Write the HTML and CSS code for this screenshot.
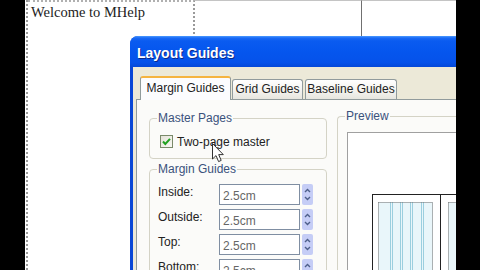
FILE: index.html
```html
<!DOCTYPE html>
<html>
<head>
<meta charset="utf-8">
<link rel="stylesheet" href="styles.css">
</head>
<body>
<div class="screen">
  <div class="doc">
    <div class="cell c1"><span class="welcome">Welcome to MHelp</span></div>
    <div class="cell c2"></div>
    <div class="cell c3"></div>
  </div>
  <div class="dialog">
    <div class="titlebar">Layout Guides</div>
    <div class="body">
      <div class="tabs">
        <div class="tab active t1">Margin Guides</div>
        <div class="tab t2">Grid Guides</div>
        <div class="tab t3">Baseline Guides</div>
      </div>
      <div class="panel">
        <div class="leftcol">
          <div class="group gp-master">
            <div class="legend">Master Pages</div>
            <div class="check">
              <span class="box"><svg width="11" height="11" viewBox="0 0 11 11"><path d="M2 5.5 L4.3 8 L9 2.8" fill="none" stroke="#21a121" stroke-width="2"/></svg></span>
              <span>Two-page master</span>
            </div>
          </div>
          <div class="group gp-margin">
            <div class="legend">Margin Guides</div>
            <div class="rows">
              <div class="row"><span class="lbl">Inside:</span><span class="input">2.5cm</span><span class="spin"><svg width="11" height="21" viewBox="0 0 11 21"><path d="M3 8 L5.5 5.5 L8 8 M3 13 L5.5 15.5 L8 13" fill="none" stroke="#4e5f8a" stroke-width="1.4"/></svg></span></div>
              <div class="row"><span class="lbl">Outside:</span><span class="input">2.5cm</span><span class="spin"><svg width="11" height="21" viewBox="0 0 11 21"><path d="M3 8 L5.5 5.5 L8 8 M3 13 L5.5 15.5 L8 13" fill="none" stroke="#4e5f8a" stroke-width="1.4"/></svg></span></div>
              <div class="row"><span class="lbl">Top:</span><span class="input">2.5cm</span><span class="spin"><svg width="11" height="21" viewBox="0 0 11 21"><path d="M3 8 L5.5 5.5 L8 8 M3 13 L5.5 15.5 L8 13" fill="none" stroke="#4e5f8a" stroke-width="1.4"/></svg></span></div>
              <div class="row"><span class="lbl">Bottom:</span><span class="input">2.5cm</span><span class="spin"><svg width="11" height="21" viewBox="0 0 11 21"><path d="M3 8 L5.5 5.5 L8 8 M3 13 L5.5 15.5 L8 13" fill="none" stroke="#4e5f8a" stroke-width="1.4"/></svg></span></div>
            </div>
          </div>
        </div>
        <div class="group gp-preview">
          <div class="legend">Preview</div>
          <div class="previewbox">
            <svg width="200" height="200" viewBox="0 0 200 200">
              <rect x="30" y="69" width="55" height="140" fill="#e9f6fa"/>
              <rect x="100" y="69" width="60" height="140" fill="#e9f6fa"/>
              <g stroke="#9ccfdf" stroke-width="1">
                <line x1="42.5" y1="69" x2="42.5" y2="200"/>
                <line x1="44.5" y1="69" x2="44.5" y2="200"/>
                <line x1="52.5" y1="69" x2="52.5" y2="200"/>
                <line x1="54.5" y1="69" x2="54.5" y2="200"/>
                <line x1="62.5" y1="69" x2="62.5" y2="200"/>
                <line x1="64.5" y1="69" x2="64.5" y2="200"/>
                <line x1="73.5" y1="69" x2="73.5" y2="200"/>
                <line x1="75.5" y1="69" x2="75.5" y2="200"/>
              </g>
              <g stroke="#6a6a6a" stroke-width="1" stroke-dasharray="1 1" fill="none">
                <line x1="30.5" y1="69.5" x2="30.5" y2="200"/>
                <line x1="84.5" y1="69.5" x2="84.5" y2="200"/>
                <line x1="30.5" y1="69.5" x2="84.5" y2="69.5"/>
                <line x1="100.5" y1="69.5" x2="100.5" y2="200"/>
                <line x1="100.5" y1="69.5" x2="160" y2="69.5"/>
              </g>
              <rect x="24.5" y="61.5" width="160" height="160" fill="none" stroke="#222" stroke-width="1"/>
              <line x1="92.5" y1="61.5" x2="92.5" y2="200" stroke="#222" stroke-width="1"/>
            </svg>
          </div>
        </div>
      </div>
    </div>
  </div>
  <svg class="cursor" width="13" height="21" viewBox="0 0 13 21"><path d="M0.5 0.5 L0.5 16 L4 12.6 L6.6 18.6 L9.2 17.4 L6.7 11.6 L11.3 11.6 Z" fill="#fff" stroke="#333" stroke-width="1"/></svg>
</div>
</body>
</html>
```
FILE: styles.css
```css
html, body {
  margin: 0;
  padding: 0;
}
body {
  background: #000;
  width: 480px;
  height: 270px;
  overflow: hidden;
  font-family: "Liberation Sans", Arial, sans-serif;
  font-size: 12px;
}
.screen {
  position: relative;
  margin-left: 25px;
  width: 431px;
  height: 270px;
  background: #fff;
  overflow: hidden;
}
.doc {
  display: flex;
  align-items: flex-start;
  height: 270px;
  margin-left: 1px;
  border-left: 2px dotted #9a9a9a;
}
.cell {
  height: 40px;
}
.c1 {
  width: 165px;
  border-top: 2px dotted #b0b0b0;
  border-right: 2px dotted #9a9a9a;
}
.welcome {
  display: block;
  padding: 2px 0 0 3px;
  font-family: "Liberation Serif", "Times New Roman", serif;
  font-size: 14.5px;
  color: #222;
}
.c2 {
  width: 166px;
  border-top: 1px solid #c4c4c4;
  border-right: 1px solid #707070;
}
.c3 {
  flex: 1;
  border-top: 1px solid #c4c4c4;
}
.dialog {
  position: absolute;
  left: 105px;
  top: 36px;
  width: 420px;
  height: 240px;
  display: flex;
  flex-direction: column;
  border-radius: 8px 8px 0 0;
  overflow: hidden;
  background: #0a47d6;
}
.titlebar {
  height: 31px;
  box-sizing: border-box;
  padding: 4px 0 0 7px;
  line-height: 27px;
  font-size: 14px;
  font-weight: bold;
  color: #fff;
  text-shadow: 1px 1px 0 #0b2a8a;
  background: linear-gradient(#4c9bff 0, #1a6af5 2px, #0a5bf0 5px, #0556ee 50%, #0552ea 85%, #0448d8 100%);
}
.body {
  flex: 1;
  background: #ece9d8;
  border-left: 3px solid #0a47d6;
  padding: 9px 0 0 3px;
  display: flex;
  flex-direction: column;
}
.tabs {
  display: flex;
  align-items: flex-end;
  padding-left: 4px;
  height: 23px;
  gap: 1px;
  position: relative;
  z-index: 2;
}
.tab {
  box-sizing: border-box;
  flex-shrink: 0;
  height: 20px;
  line-height: 19px;
  text-align: center;
  white-space: nowrap;
  color: #222;
  border: 1px solid #919b9c;
  border-bottom: none;
  border-radius: 3px 3px 0 0;
  background: linear-gradient(#ffffff, #f0efea 70%, #e6e5de);
}
.tab.active {
  height: 24px;
  line-height: 21px;
  margin-bottom: -1px;
  border-top: 2px solid #f5b440;
  background: #fcfcfe;
}
.t1 { width: 91px; }
.t2 { width: 71px; }
.t3 { width: 92px; margin-left: 1px; }
.panel {
  flex: 1;
  background: #fbfbf9;
  border: 1px solid #919b9c;
  border-right: none;
  padding: 18px 0 0 12px;
  display: flex;
  align-items: flex-start;
  gap: 10px;
}
.leftcol {
  flex-shrink: 0;
  width: 178px;
  display: flex;
  flex-direction: column;
  gap: 10px;
}
.group {
  border: 1px solid #d4d3c6;
  border-radius: 4px;
}
.legend {
  margin: -8px 0 0 7px;
  padding: 0 1px;
  width: fit-content;
  line-height: 14px;
  background: #fbfbf9;
  color: #3a527c;
}
.gp-master {
  height: 41px;
  box-sizing: border-box;
}
.check {
  display: flex;
  align-items: center;
  gap: 4px;
  margin: 10px 0 0 10px;
  height: 13px;
  color: #222;
}
.box {
  width: 13px;
  height: 13px;
  box-sizing: border-box;
  border: 1px solid #7a8a6a;
  background: linear-gradient(135deg, #e4e3d8, #f8f8f4);
  display: flex;
  align-items: center;
  justify-content: center;
}
.gp-margin {
  height: 120px;
}
.rows {
  margin: 8px 0 0 8px;
  display: flex;
  flex-direction: column;
  gap: 4px;
}
.row {
  display: flex;
  align-items: flex-start;
  height: 21px;
}
.lbl {
  width: 61px;
  line-height: 16px;
  color: #222;
}
.input {
  box-sizing: border-box;
  width: 81px;
  height: 21px;
  border: 1px solid #7f8ea2;
  background: #fff;
  padding: 3px 0 0 3px;
  line-height: 16px;
  color: #666;
}
.spin {
  margin-left: 2px;
  width: 11px;
  height: 21px;
  border-radius: 2px;
  background: #c5cdf6;
  display: flex;
}
.gp-preview {
  flex-shrink: 0;
  width: 200px;
  height: 200px;
  margin-top: -2px;
  padding-left: 9px;
  border-right: none;
  border-radius: 4px 0 0 4px;
}
.gp-preview .legend {
  margin-left: -2px;
}
.previewbox {
  margin-top: 9px;
  width: 200px;
  height: 200px;
  border: 1px solid #a0a0a0;
  background: #fff;
}
.previewbox svg {
  display: block;
}
.cursor {
  position: absolute;
  left: 187px;
  top: 143px;
}
```
